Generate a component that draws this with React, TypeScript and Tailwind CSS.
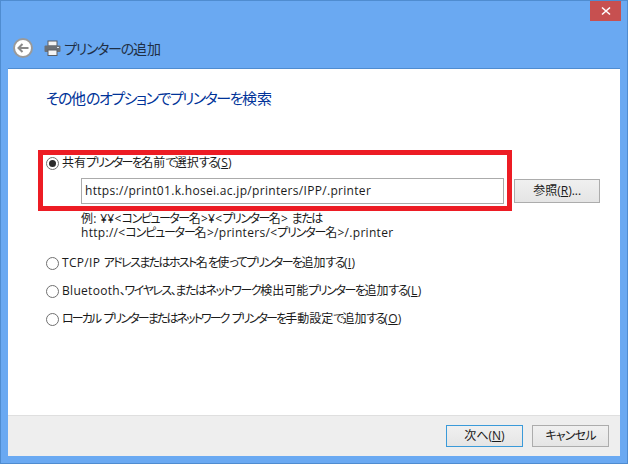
const font = { fontFamily: '"Open Sans", "Noto Sans CJK JP", sans-serif' };

// the reference's kana are much narrower than its kanji, so kana runs get their own tracking
function Jp({ text, kana = "tracking-[-1.6px]" }: { text: string; kana?: string }) {
  return (
    <>
      {text.split(/([\u3040-\u30ff\u3001]+)/).map((run, i) => (
        <span key={i} className={i % 2 ? kana : /[a-zA-Z0-9<>\/¥]/.test(run) ? "tracking-[0.3px]" : ""}>
          {run}
        </span>
      ))}
    </>
  );
}

function Radio({ checked }: { checked?: boolean }) {
  return (
    <span className="w-[13px] h-[13px] rounded-full border border-[#707070] bg-white grid place-items-center shrink-0">
      {checked && <span className="w-[7px] h-[7px] rounded-full bg-[#2b2b2b]" />}
    </span>
  );
}

function Option({ label, hotkey, checked, kana }: { label: string; hotkey: string; checked?: boolean; kana?: string }) {
  return (
    <div className="flex items-center gap-[3px] h-[16px] text-[12px] [font-feature-settings:'palt'] text-[#1a1a1a] whitespace-nowrap">
      <Radio checked={checked} />
      <span>
        <Jp text={label} kana={kana} />
        <span className="tracking-[0.3px]">
          (<span className="underline">{hotkey}</span>)
        </span>
      </span>
    </div>
  );
}

function WinButton({ children, focused, className }: { children: React.ReactNode; focused?: boolean; className?: string }) {
  return (
    <button
      className={`text-[12px] [font-feature-settings:'palt'] text-[#1a1a1a] border bg-gradient-to-b from-[#f0f0f0] to-[#e5e5e5] ${
        focused ? "border-[#3a9ad9]" : "border-[#acacac]"
      } ${className ?? ""}`}
    >
      {children}
    </button>
  );
}

export default function App() {
  return (
    <div className="relative w-[628px] h-[464px] bg-[#6aa9f2] border border-[#4f8cd0] flex flex-col overflow-hidden" style={font}>
      {/* title bar */}
      <div className="h-[67px] flex flex-col shrink-0">
        <div className="flex justify-end pr-[6px]">
          <div className="w-[31px] h-[20px] bg-[#c75050] grid place-items-center">
            <svg width="10" height="10" viewBox="0 0 10 10">
              <path d="M1 1.5 L9 8.5 M9 1.5 L1 8.5" stroke="#fff" strokeWidth="1.6" />
            </svg>
          </div>
        </div>
        <div className="flex items-center mt-[16px] pl-[12px] h-[22px]">
          <div className="w-[20px] h-[20px] rounded-full bg-white border-2 border-[#9a9a9a] grid place-items-center">
            <svg width="12" height="10" viewBox="0 0 12 10">
              <path d="M5.5 1 L1.5 5 L5.5 9 M1.5 5 H11.5" fill="none" stroke="#8a8a8a" strokeWidth="2" />
            </svg>
          </div>
          <svg width="17" height="16" viewBox="0 0 17 16" className="ml-[11px]">
            <rect x="4" y="1" width="9" height="5" fill="#f4f4f4" stroke="#5a5f66" />
            <rect x="0.5" y="5.5" width="16" height="6.5" rx="1" fill="#6b7076" />
            <rect x="4" y="10" width="9" height="5.5" fill="#f4f4f4" stroke="#5a5f66" />
            <rect x="13" y="7" width="2" height="1" fill="#dfe6ee" />
          </svg>
          <span className="ml-[3px] text-[14px] [font-feature-settings:'palt'] text-[#1f2f45]">
            <Jp text="プリンターの追加" kana="tracking-[-1.2px]" />
          </span>
        </div>
      </div>

      {/* content panel */}
      <div className="mx-[7px] h-[388px] bg-white border-t border-[#4f8cd0] flex flex-col shrink-0">
        <div className="flex-1 pl-[38px] pr-[20px] pt-[18px]">
          <h1 className="text-[15px] leading-[22px] [font-feature-settings:'palt'] text-[#003399] font-normal">
            <Jp text="その他のオプションでプリンターを検索" kana="tracking-[-1.5px]" />
          </h1>

          <div className="mt-[46px]">
            <Option label="共有プリンターを名前で選択する" hotkey="S" checked />
            <div className="mt-[7px] ml-[35px] flex items-center gap-[10px]">
              <div className="w-[425px] h-[26px] border border-[#ababab] bg-white px-[3px] flex items-center text-[12px] text-[#1a1a1a] tracking-[0.31px]">
                https://print01.k.hosei.ac.jp/printers/IPP/.printer
              </div>
              <WinButton className="w-[86px] h-[24px]">
                参照(<span className="underline">R</span>)...
              </WinButton>
            </div>
            <div className="mt-[8px] ml-[35px] text-[12px] leading-[14px] [font-feature-settings:'palt'] text-[#1a1a1a] whitespace-nowrap">
              <div>
                <Jp text="例: ¥¥<コンピューター名>¥<プリンター名> または" kana="tracking-[-1.5px]" />
              </div>
              <div>
                <Jp text="http://<コンピューター名>/printers/<プリンター名>/.printer" kana="tracking-[-1.2px]" />
              </div>
            </div>
          </div>

          <div className="mt-[15px] flex flex-col gap-[12px]">
            <Option label="TCP/IP アドレスまたはホスト名を使ってプリンターを追加する" hotkey="I" />
            <Option label="Bluetooth、ワイヤレス、またはネットワーク検出可能プリンターを追加する" hotkey="L" kana="tracking-[-1.45px]" />
            <Option label="ローカル プリンターまたはネットワーク プリンターを手動設定で追加する" hotkey="O" kana="tracking-[-1.9px]" />
          </div>
        </div>

        {/* footer */}
        <div className="h-[41px] bg-[#eeeeee] border-t border-[#dfdfdf] flex items-start justify-end gap-[9px] pt-[9px] pr-[11px] shrink-0">
          <WinButton focused className="w-[77px] h-[22px]">
            次へ(<span className="underline">N</span>)
          </WinButton>
          <WinButton className="w-[77px] h-[22px]">
            <Jp text="キャンセル" kana="tracking-[-0.8px]" />
          </WinButton>
        </div>
      </div>

      {/* annotation over the dialog */}
      <div className="absolute left-[37px] top-[149px] w-[474px] h-[61px] border-[5px] border-[#ed1c24]" />
    </div>
  );
}
